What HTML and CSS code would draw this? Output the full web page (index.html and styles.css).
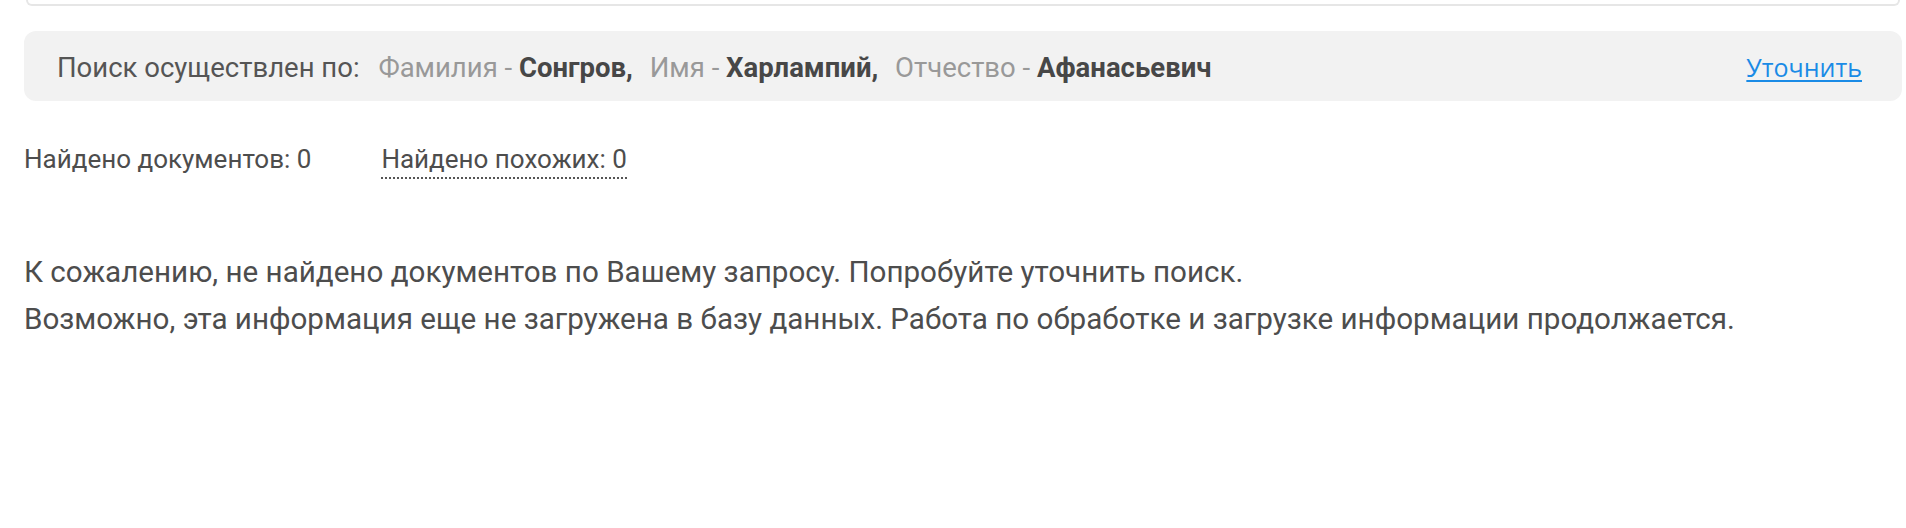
FILE: index.html
```html
<!DOCTYPE html>
<html lang="ru">
<head>
    <meta charset="UTF-8">
    <meta name="viewport" content="width=device-width, initial-scale=1.0">
    <title>Результаты поиска</title>
    <link rel="stylesheet" href="styles.css">
</head>
<body>
    <div class="page">
        <div class="search-form"></div>

        <div class="query">
            <div class="query-params">
                <span class="query-title">Поиск осуществлен по:</span>
                <span class="param">Фамилия - <b>Сонгров,</b></span>
                <span class="param">Имя - <b>Харлампий,</b></span>
                <span class="param">Отчество - <b>Афанасьевич</b></span>
            </div>
            <a href="#" class="refine">Уточнить</a>
        </div>

        <div class="counts">
            <span class="count">Найдено документов: 0</span>
            <span class="count similar">Найдено похожих: 0</span>
        </div>

        <div class="empty">
            К сожалению, не найдено документов по Вашему запросу. Попробуйте уточнить поиск.<br>
            Возможно, эта информация еще не загружена в базу данных. Работа по обработке и загрузке информации продолжается.
        </div>
    </div>
</body>
</html>
```

FILE: styles.css
```css
*{
    box-sizing: border-box;
}
body{
    margin: 0;
    background: #fff;
    color: #4d4d4d;
    font-family: Roboto, "Liberation Sans", sans-serif;
}
.page{
    padding: 0 4px 0 24px;
}
/* bottom edge of the search form above */
.search-form{
    height: 6px;
    margin: 0 2px;
    border: 2px solid #e6e6e6;
    border-top: 0;
    border-radius: 0 0 10px 10px;
}
.query{
    display: flex;
    justify-content: space-between;
    align-items: baseline;
    margin-top: 25px;
    padding: 18px 40px 15px 33px;
    background: #f2f2f2;
    border-radius: 12px;
    font-size: 27.5px;
    line-height: 36px;
}
.query-title{
    color: #555;
    margin-right: 12px;
}
.param{
    color: #999;
    margin-right: 10px;
}
.param b{
    color: #474747;
    font-weight: 700;
}
.refine{
    font-family: "Open Sans", Roboto, sans-serif;
    font-size: 25px;
    color: #1a8be6;
    text-decoration: underline;
    text-decoration-thickness: 2px;
    text-underline-offset: 3px;
}
.counts{
    display: flex;
    gap: 70px;
    margin-top: 40px;
    font-size: 26px;
    line-height: 36px;
    color: #4d4d4d;
}
.similar{
    border-bottom: 2px dotted #555;
    line-height: 30px;
    align-self: flex-start;
    padding-top: 3px;
    height: 38px;
}
.empty{
    margin-top: 70px;
    font-size: 29.6px;
    line-height: 47px;
    color: #4d4d4d;
}
```
